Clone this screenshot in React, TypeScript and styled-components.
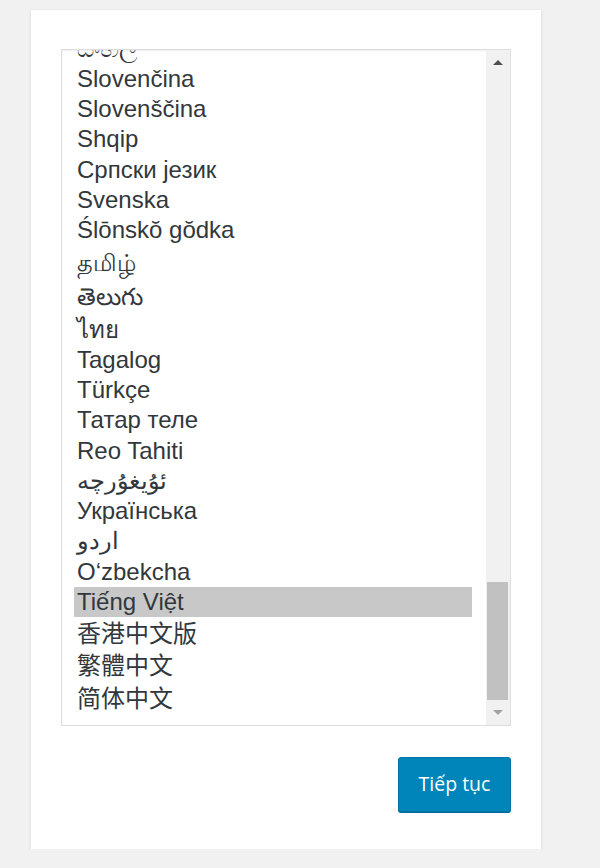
import React from "react";
import styled, { createGlobalStyle } from "styled-components";

const GlobalStyle = createGlobalStyle`
  html, body { margin: 0; padding: 0; background: #f1f1f1; }
  body { padding: 10px 0 0 31px; font-family: "Liberation Sans", Arial, "Noto Sans CJK SC", sans-serif; }
`;

const Card = styled.div`
  box-sizing: border-box;
  width: 510px;
  height: 839px;
  background: #fff;
  box-shadow: 0 1px 3px rgba(0, 0, 0, 0.13);
  padding: 39px 30px 37px 30px;
  display: flex;
  flex-direction: column;
`;

const SelectBox = styled.div`
  box-sizing: border-box;
  width: 450px;
  height: 677px;
  border: 1px solid #ddd;
  box-shadow: inset 0 1px 2px rgba(0, 0, 0, 0.07);
  background: #fff;
  display: flex;
`;

const ListViewport = styled.div`
  flex: 1;
  min-width: 0;
  overflow: hidden;
  display: flex;
  flex-direction: column;
  justify-content: flex-end;
  padding: 0 14px 10px 12px;
`;

const Option = styled.div<{ $selected?: boolean; $h: number }>`
  flex: none;
  box-sizing: border-box;
  height: ${(p) => p.$h}px;
  line-height: ${(p) => p.$h}px;
  font-size: 24px;
  padding: 0 3px;
  color: #32373c;
  white-space: nowrap;
  overflow: visible;
  background: ${(p) => (p.$selected ? "#c8c8c8" : "transparent")};
`;

const ScrollTrack = styled.div`
  width: 24px;
  flex: none;
  background: #f1f1f1;
  display: flex;
  flex-direction: column;
`;

const ArrowButton = styled.div`
  height: 25px;
  flex: none;
  display: flex;
  align-items: center;
  justify-content: center;
`;

const Arrow = styled.div<{ $dir: "up" | "down"; $disabled?: boolean }>`
  width: 0;
  height: 0;
  border-left: 5px solid transparent;
  border-right: 5px solid transparent;
  ${(p) =>
    p.$dir === "up"
      ? `border-bottom: 5px solid ${p.$disabled ? "#a3a3a3" : "#505050"};`
      : `border-top: 5px solid ${p.$disabled ? "#a3a3a3" : "#505050"};`}
`;

const TrackSpace = styled.div`
  flex: 1;
`;

const Thumb = styled.div`
  height: 118px;
  flex: none;
  margin: 0 2px 0 1px;
  background: #c1c1c1;
`;

const Actions = styled.div`
  display: flex;
  justify-content: flex-end;
  margin-top: 31px;
`;

const PrimaryButton = styled.button`
  box-sizing: border-box;
  height: 55px;
  width: 113px;
  padding: 0 12px 2px;
  background: #0085ba;
  border: 1px solid #0073aa;
  border-radius: 3px;
  box-shadow: 0 1px 0 #006799;
  color: #fff;
  font-family: "Open Sans", "Noto Sans", sans-serif;
  font-size: 19.5px;
  cursor: pointer;
`;

const L = 30.3;
const CJK = 33;

const languages: { name: string; h: number }[] = [
  { name: "Română", h: L },
  { name: "Русский", h: L },
  { name: "සිංහල", h: L },
  { name: "Slovenčina", h: L },
  { name: "Slovenščina", h: L },
  { name: "Shqip", h: L },
  { name: "Српски језик", h: L },
  { name: "Svenska", h: L },
  { name: "Ślōnskŏ gŏdka", h: L },
  { name: "தமிழ்", h: 34 },
  { name: "తెలుగు", h: 34 },
  { name: "ไทย", h: 31 },
  { name: "Tagalog", h: L },
  { name: "Türkçe", h: L },
  { name: "Татар теле", h: L },
  { name: "Reo Tahiti", h: L },
  { name: "ئۇيغۇرچە", h: L },
  { name: "Українська", h: L },
  { name: "اردو", h: L },
  { name: "O‘zbekcha", h: L },
  { name: "Tiếng Việt", h: 30 },
  { name: "香港中文版", h: CJK },
  { name: "繁體中文", h: 32.5 },
  { name: "简体中文", h: 32.5 },
];

export default function App() {
  return (
    <>
      <GlobalStyle />
      <Card>
        <SelectBox>
          <ListViewport>
            {languages.map((l) => (
              <Option key={l.name} $h={l.h} $selected={l.name === "Tiếng Việt"}>
                {l.name}
              </Option>
            ))}
          </ListViewport>
          <ScrollTrack>
            <ArrowButton>
              <Arrow $dir="up" />
            </ArrowButton>
            <TrackSpace />
            <Thumb />
            <ArrowButton>
              <Arrow $dir="down" $disabled />
            </ArrowButton>
          </ScrollTrack>
        </SelectBox>
        <Actions>
          <PrimaryButton>Tiếp tục</PrimaryButton>
        </Actions>
      </Card>
    </>
  );
}
